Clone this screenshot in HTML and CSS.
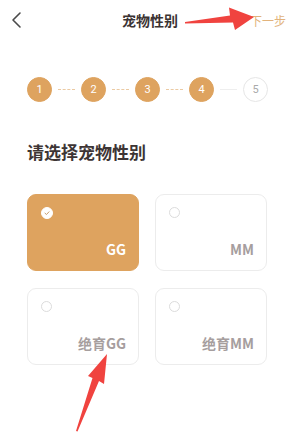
FILE: index.html
```html
<!DOCTYPE html>
<html lang="zh-CN">
<head>
    <meta charset="UTF-8">
    <meta name="viewport" content="width=device-width, initial-scale=1.0">
    <title>宠物性别</title>
    <link rel="stylesheet" href="styles.css">
</head>
<body>

<div class="page">
    <div class="nav-bar">
        <span class="back">
            <svg width="12" height="18" viewBox="0 0 12 18"><path d="M10 2 L3 9 L10 16" fill="none" stroke="#4a4a4a" stroke-width="1.6" stroke-linecap="round" stroke-linejoin="round"/></svg>
        </span>
        <span class="title">宠物性别</span>
        <span class="next">下一步</span>
    </div>

    <div class="steps">
        <div class="step done">1</div>
        <div class="line dashed"></div>
        <div class="step done">2</div>
        <div class="line dashed"></div>
        <div class="step done">3</div>
        <div class="line dashed"></div>
        <div class="step done">4</div>
        <div class="line"></div>
        <div class="step">5</div>
    </div>

    <h2 class="heading">请选择宠物性别</h2>

    <div class="options">
        <div class="card selected">
            <span class="radio">
                <svg width="8" height="8" viewBox="0 0 8 8"><path d="M2 4.2 L3.5 5.5 L6 2.8" fill="none" stroke="#c9a070" stroke-width="1" stroke-linecap="round"/></svg>
            </span>
            <span class="label">GG</span>
        </div>
        <div class="card">
            <span class="radio"></span>
            <span class="label">MM</span>
        </div>
        <div class="card">
            <span class="radio"></span>
            <span class="label">绝育GG</span>
        </div>
        <div class="card">
            <span class="radio"></span>
            <span class="label">绝育MM</span>
        </div>
    </div>

    <!-- annotation arrows -->
    <svg class="arrow arrow-top" width="74" height="28" viewBox="0 0 74 28">
        <path d="M2 18 L47 11.5 L46 3.5 L71 13 L52 26 L50 18.5 L2 19.5 Z" fill="#f0433f"/>
    </svg>
    <svg class="arrow arrow-bottom" width="40" height="82" viewBox="0 0 40 82">
        <path d="M6 80 L22.5 27 L18 25 L37 3 L34 33 L29 30 L7.5 80.5 Z" fill="#f0433f"/>
    </svg>
</div>

</body>
</html>
```

FILE: styles.css
```css
body {
    margin: 0;
    padding: 0;
    background-color: #fff;
    font-family: "Noto Sans CJK SC", "Noto Sans", sans-serif;
}

.page {
    position: relative;
    width: 290px;
    height: 442px;
    overflow: hidden;
}

.nav-bar {
    display: flex;
    align-items: center;
    justify-content: space-between;
    height: 40px;
    padding: 0 4px 0 10px;
}

.back {
    display: flex;
    width: 30px;
}

.title {
    font-size: 14px;
    font-weight: bold;
    color: #3b3333;
    margin-left: 14px;
}

.next {
    font-size: 12px;
    color: #e2b37c;
    width: 40px;
    text-align: right;
}

.steps {
    display: flex;
    align-items: center;
    padding: 37px 0 0 27px;
}

.step {
    width: 25px;
    height: 25px;
    border-radius: 50%;
    box-sizing: border-box;
    border: 1px solid #e6e6e6;
    color: #aaa;
    font-family: Roboto, sans-serif;
    font-size: 11px;
    display: flex;
    align-items: center;
    justify-content: center;
}

.step.done {
    background-color: #dea35f;
    border-color: #dea35f;
    color: #fff;
}

.line {
    width: 17px;
    height: 0;
    margin: 0 6px;
    border-top: 1px solid #eee;
}

.line.dashed {
    border-top: 1px dashed #ebcaa3;
}

.heading {
    margin: 38px 0 0 27px;
    font-size: 17px;
    font-weight: bold;
    color: #3d3535;
    line-height: 24px;
}

.options {
    display: grid;
    grid-template-columns: 112px 112px;
    column-gap: 16px;
    row-gap: 17px;
    padding: 30px 0 0 27px;
}

.card {
    position: relative;
    height: 77px;
    box-sizing: border-box;
    border: 1px solid #ececec;
    border-radius: 9px;
    display: flex;
    flex-direction: column;
    justify-content: space-between;
    padding: 12px 12px 14px 13px;
}

.card.selected {
    background-color: #dea35f;
    border-color: #dea35f;
}

.radio {
    width: 11px;
    height: 11px;
    box-sizing: border-box;
    border-radius: 50%;
    border: 1px solid #dcdcdc;
    display: flex;
    align-items: center;
    justify-content: center;
}

.card.selected .radio {
    width: 12px;
    height: 12px;
    background-color: #fff;
    border-color: #fff;
}

.label {
    align-self: flex-end;
    font-size: 14px;
    line-height: 14px;
    font-weight: bold;
    color: #a69e9e;
}

.card.selected .label {
    color: #fff;
}

.arrow {
    position: absolute;
}

.arrow-top {
    left: 183px;
    top: 4px;
}

.arrow-bottom {
    left: 70px;
    top: 351px;
}
```
